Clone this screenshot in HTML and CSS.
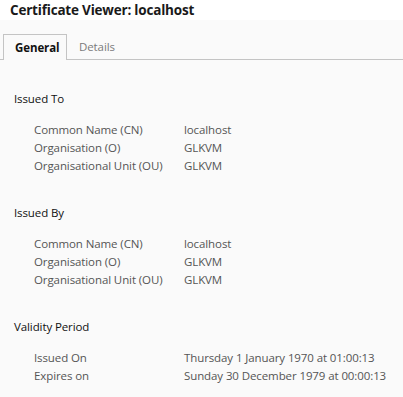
FILE: index.html
```html
<!DOCTYPE html>
<html lang="en">
<head>
    <meta charset="UTF-8">
    <meta name="viewport" content="width=device-width, initial-scale=1.0">
    <title>Certificate Viewer: localhost</title>
    <link rel="stylesheet" href="styles.css">
</head>
<body>
    <div class="title-bar">Certificate Viewer: localhost</div>

    <div class="tabs">
        <div class="tab active">General</div>
        <div class="tab">Details</div>
    </div>

    <div class="content">
        <section class="section">
            <h2>Issued To</h2>
            <div class="fields">
                <div class="label">Common Name (CN)</div>
                <div class="value">localhost</div>
                <div class="label">Organisation (O)</div>
                <div class="value">GLKVM</div>
                <div class="label">Organisational Unit (OU)</div>
                <div class="value">GLKVM</div>
            </div>
        </section>

        <section class="section">
            <h2>Issued By</h2>
            <div class="fields">
                <div class="label">Common Name (CN)</div>
                <div class="value">localhost</div>
                <div class="label">Organisation (O)</div>
                <div class="value">GLKVM</div>
                <div class="label">Organisational Unit (OU)</div>
                <div class="value">GLKVM</div>
            </div>
        </section>

        <section class="section">
            <h2>Validity Period</h2>
            <div class="fields">
                <div class="label">Issued On</div>
                <div class="value">Thursday 1 January 1970 at 01:00:13</div>
                <div class="label">Expires on</div>
                <div class="value">Sunday 30 December 1979 at 00:00:13</div>
            </div>
        </section>
    </div>
</body>
</html>
```

FILE: styles.css
```css
* {
    box-sizing: border-box;
    margin: 0;
    padding: 0;
    font-family: 'Open Sans', 'Noto Sans', sans-serif;
}

body {
    background-color: #fafafa;
    height: 397px;
    overflow: hidden;
}

.title-bar {
    height: 20px;
    background-color: #fff;
    padding-left: 10px;
    font-size: 13.5px;
    font-weight: 700;
    line-height: 20px;
    color: #1a1a1a;
    letter-spacing: -0.2px;
}

.tabs {
    display: flex;
    height: 40px;
    padding: 14px 0 0 3px;
    border-bottom: 1px solid #c4c4c4;
}

.tab {
    height: 26px;
    padding: 0 11px 0 12px;
    font-size: 11.5px;
    line-height: 25px;
    color: #7a7a7a;
    letter-spacing: -0.1px;
}

.tab.active {
    width: 64px;
    padding: 0 11px;
    border: 1px solid #c4c4c4;
    border-bottom: none;
    background-color: #fafafa;
    color: #111;
    font-weight: 700;
    margin-bottom: -1px;
}

.content {
    padding: 30px 0 0 14px;
}

.section {
    margin-bottom: 29px;
}

.section h2 {
    font-size: 11.5px;
    font-weight: 400;
    line-height: 18px;
    letter-spacing: -0.1px;
    color: #111;
    margin-bottom: 13px;
}

.fields {
    display: grid;
    grid-template-columns: 150px auto;
    padding-left: 20px;
    font-size: 11.5px;
    line-height: 18px;
    letter-spacing: -0.1px;
    color: #555;
}
```
